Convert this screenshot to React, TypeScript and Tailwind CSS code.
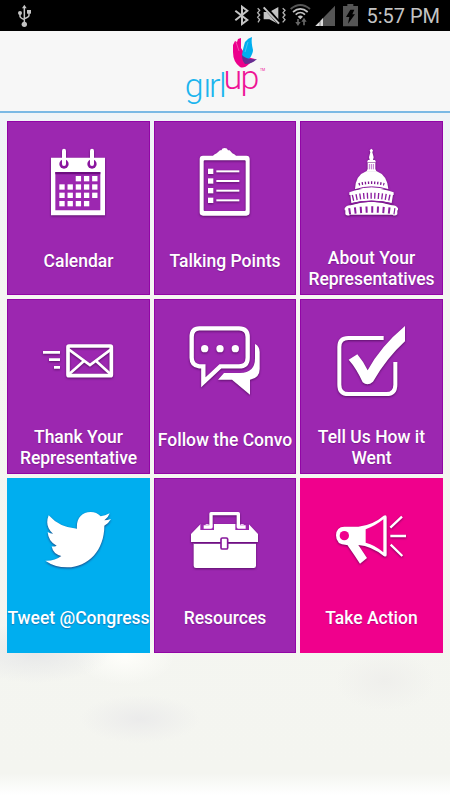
import type { ReactNode } from 'react';
import clsx from 'clsx';

type Tile = {
  lines: string[];
  color: 'purple' | 'blue' | 'pink';
  viewBox: string;
  icon: ReactNode;
  tall?: boolean;
};

const PURPLE = '#9c27b0';

const CalendarIcon = () => (
  <>
    <path d="M153 128H315V301H153Z" fill="#fff" />
    <path d="M166 171H301V286H166Z" fill={PURPLE} />
    <path d="M166 171H301V178H166Z" fill="#6d0d80" />
    {[192, 276].map((x) => (
      <g key={x}>
        <circle cx={x} cy="147" r="14" fill="#8a169e" />
        <rect x={x - 6} y="101" width="12" height="52" rx="6" fill="#fff" />
      </g>
    ))}
    {[
      [2, 3, 4],
      [0, 1, 2, 3, 4],
      [0, 1, 2, 3, 4],
      [0, 1, 2, 3],
    ].map((row, r) =>
      row.map((c) => (
        <rect key={`${r}-${c}`} x={178 + c * 24.6} y={183 + r * 25} width="16" height="16" fill="#fff" />
      )),
    )}
  </>
);

const ClipboardIcon = () => (
  <>
    <path d="M188 124Q192 118 200 115L210 106H214Q216 99 224 99Q232 99 234 106H239L247 115Q255 118 259 124Z" fill="#fff" />
    <path
      fillRule="evenodd"
      d="M159 122H289Q299 122 299 132V292Q299 302 289 302H159Q149 302 149 292V132Q149 122 159 122ZM164 136Q161 136 161 139V285Q161 288 164 288H284Q287 288 287 285V139Q287 136 284 136Z"
      fill="#fff"
    />
    {[169, 198, 227, 256].map((y) => (
      <g key={y} fill="#fff">
        <rect x="174" y={y - 8} width="16" height="16" />
        <rect x="199" y={y - 3} width="69" height="6" />
      </g>
    ))}
  </>
);

const CapitolIcon = () => (
  <>
    <g fill="#fff">
      <path d="M229 101L234 106L232 112L236 127L234 135H224L222 127L226 112L224 106Z" />
      <path d="M219 135H240L243 142H216ZM218 143H241V162L245 170H214L218 162Z" />
      <path d="M180 222Q182 180 214 169H245Q276 180 280 222Z" />
      <path d="M163 232Q228 208 296 232V240H163ZM166 239H294L290 264Q230 250 169 264Z" />
      <path d="M149 280Q155 270 167 271Q229 250 291 271Q303 270 309 280V286H149ZM151 285H307V298Q300 305 292 299H166Q158 305 151 298Z" />
    </g>
    <path d="M191 208Q229 198 268 208" fill="none" stroke="#7c1590" strokeWidth="8" strokeDasharray="4 5.3" />
    <path d="M223 147V163M229 147V163M235 147V163" stroke={PURPLE} strokeWidth="2" />
    <path d="M180 224Q229 207 281 224" fill="none" stroke="#8a1a9d" strokeWidth="3" />
    <path d="M172 249Q229 235 289 249" fill="none" stroke="#8c1da0" strokeWidth="18" strokeDasharray="4 7" />
    <path d="M161 289Q229 278 300 289" fill="none" stroke="#8c1da0" strokeWidth="19" strokeDasharray="6 11" />
    <path d="M163 268Q229 249 296 268" fill="none" stroke="#8a1a9d" strokeWidth="4" />
  </>
);

const EnvelopeIcon = () => (
  <g fill="none" stroke="#fff">
    <rect x="204" y="153" width="130" height="89" rx="3" strokeWidth="11" />
    <path d="M207 164L270 210L332 164M207 238L251 199M332 238L289 199" strokeWidth="8" />
    <path d="M129 172H180M147 194H180M162 217H180" strokeWidth="8" />
  </g>
);

const ChatIcon = () => (
  <>
    <path
      d="M148 100H267Q293 100 293 126V188Q293 214 267 214H211L160 262V214H148Q125 211 125 188V126Q125 100 148 100Z"
      fill="none"
      stroke="#fff"
      strokeWidth="13"
    />
    <g fill="#fff">
      <circle cx="164" cy="161" r="11" />
      <circle cx="210" cy="161" r="11" />
      <circle cx="256" cy="161" r="11" />
      <path d="M315 147Q329 154 329 171V222Q329 250 300 254V299L246 254H204L222 234H270Q315 234 315 190Z" />
    </g>
  </>
);

const CheckIcon = () => (
  <>
    <path
      d="M266 129H160Q133 129 133 156V269Q133 297 160 297H274Q301 297 301 269V201"
      fill="none"
      stroke="#fff"
      strokeWidth="12"
    />
    <path d="M161 194L187 178Q204 198 218 226Q256 155 330 93V139Q276 188 234 260Q218 274 203 262Q185 221 161 194Z" fill="#fff" />
  </>
);

const BirdIcon = () => (
  <path
    d="M136 257Q165 258 184 243Q159 237 155 214Q162 216 170 212Q145 200 143 171Q151 176 159 176Q133 154 146 121Q180 159 231 161C228 131 245 111 272 111Q290 111 302 124Q315 122 329 115Q325 128 313 136Q322 136 333 132Q326 145 313 152C313 226 265 276 202 277Q164 277 136 257Z"
    fill="#fff"
  />
);

const ToolboxIcon = () => (
  <>
    <path d="M152 147H296L324 177V201H123V177ZM131 205H318V272Q318 279 311 279H138Q131 279 131 272Z" fill="#fff" />
    <path d="M159 147V157H184V147M264 147V157H289V147" fill="none" stroke={PURPLE} strokeWidth="16" />
    <path d="M161 156H183V116H265V156H287" fill="none" stroke="#fff" strokeWidth="10" strokeLinejoin="round" />
    <path d="M131 204H318" stroke="#74108a" strokeWidth="4" />
    <rect x="213" y="189" width="20" height="33" rx="4" fill="#fff" stroke="#87189b" strokeWidth="5" />
  </>
);

const MegaphoneIcon = () => (
  <>
    <path d="M148 155H190Q234 150 266 122Q275 118 275 127V239Q275 248 266 243Q229 213 190 210L216 249L195 266Q178 240 157 210Q123 211 123 181Q124 155 148 155Z" fill="#fff" />
    <circle cx="148" cy="182" r="14" fill="#f0008c" />
    <path d="M212 163Q242 152 265 133V232Q240 210 212 203Z" fill="#f0008c" />
    <path d="M286 158L321 125M286 183H333M287 209L322 243" stroke="#fff" strokeWidth="7" />
  </>
);

const tiles: Tile[] = [
  { lines: ['Calendar'], color: 'purple', viewBox: '21 18 429 300', icon: <CalendarIcon /> },
  { lines: ['Talking Points'], color: 'purple', viewBox: '12 18 426 300', icon: <ClipboardIcon /> },
  { lines: ['About Your', 'Representatives'], color: 'purple', viewBox: '15 18 429 300', icon: <CapitolIcon /> },
  { lines: ['Thank Your', 'Representative'], color: 'purple', viewBox: '21 12 429 303', icon: <EnvelopeIcon />, tall: true },
  { lines: ['Follow the Convo'], color: 'purple', viewBox: '12 12 426 303', icon: <ChatIcon />, tall: true },
  { lines: ['Tell Us How it', 'Went'], color: 'purple', viewBox: '15 12 429 303', icon: <CheckIcon />, tall: true },
  { lines: ['Tweet @Congress'], color: 'blue', viewBox: '21 9 429 300', icon: <BirdIcon /> },
  { lines: ['Resources'], color: 'purple', viewBox: '12 9 426 300', icon: <ToolboxIcon /> },
  { lines: ['Take Action'], color: 'pink', viewBox: '15 9 429 300', icon: <MegaphoneIcon /> },
];

const MenuTile = ({ lines, color, viewBox, icon, tall }: Tile) => (
  <button
    className={clsx(
      'flex flex-col items-center text-white',
      color === 'purple' && 'bg-[#9c27b0] shadow-[inset_0_0_0_1px_#9205a6]',
      color === 'blue' && 'bg-[#00aeef]',
      color === 'pink' && 'bg-[#f0008c]',
    )}
  >
    <svg
      viewBox={viewBox}
      className={clsx('w-full shrink-0 drop-shadow-[0_1px_1px_rgba(50,0,60,0.6)]', tall ? 'h-[101px]' : 'h-[100px]')}
    >
      {icon}
    </svg>
    <span
      className={clsx(
        'text-center text-[17.5px] leading-[21px] font-medium whitespace-nowrap [text-shadow:0_1px_1px_rgba(60,0,70,0.3)]',
        lines.length > 1 ? 'pt-[27px]' : 'pt-[30px]',
      )}
    >
      {lines.map((line) => (
        <span key={line} className="block">
          {line}
        </span>
      ))}
    </span>
  </button>
);

const StatusBar = () => (
  <div className="flex h-[31px] items-center justify-between bg-black">
    {/* USB */}
    <svg viewBox="45 0 60 93" className="ml-[15px] h-[31px] w-5" fill="none" stroke="#c4c4c4" strokeWidth="4.5">
      <path d="M73 24V70M60 41V49Q60 54 73 59M87 38V46Q87 52 73 56" />
      <path d="M73 14L80 25H66Z" fill="#c4c4c4" stroke="none" />
      <circle cx="73" cy="73" r="8" fill="#c4c4c4" stroke="none" />
      <circle cx="60" cy="39" r="6" fill="#c4c4c4" stroke="none" />
      <path d="M81 30H93V41H81Z" fill="#c4c4c4" stroke="none" />
    </svg>

    <div className="flex h-[31px] items-center">
      {/* Bluetooth */}
      <svg viewBox="27 0 63 93" className="h-[31px] w-[21px]" fill="none" stroke="#c4c4c4" strokeWidth="6">
        <path d="M34 32L70 60L54 72V20L70 32L34 61" />
      </svg>
      {/* Muted with vibration */}
      <svg viewBox="90 0 102 93" className="h-[31px] w-[34px]">
        <path d="M119 36H136L163 21V72L136 58H119Z" fill="#c4c4c4" />
        <path d="M122 20L168 72" stroke="#000" strokeWidth="12" />
        <path d="M119 22L165 71" stroke="#c4c4c4" strokeWidth="6" />
        <path
          d="M101 25L107 31L101 38L107 45L101 52L107 59L102 67M176 25L183 31L177 38L183 45L177 52L183 59L176 67"
          fill="none"
          stroke="#b4b4b4"
          strokeWidth="4"
        />
      </svg>
      {/* Wifi with traffic arrows */}
      <svg viewBox="192 0 75 93" className="h-[31px] w-[25px]" fill="none">
        <path d="M200 27Q229 3 258 27" stroke="#555" strokeWidth="6" />
        <path d="M207 36Q229 17 251 36M215 44Q229 31 243 44" stroke="#c4c4c4" strokeWidth="5" />
        <path d="M221 50Q229 43 237 50L229 58Z" fill="#c4c4c4" />
        <path d="M222 57V70M240 76V60" stroke="#666" strokeWidth="5" />
        <path d="M214 66H230L222 78ZM232 65L240 53L248 65Z" fill="#666" />
      </svg>
      {/* Signal */}
      <svg viewBox="267 0 78 93" className="h-[31px] w-[26px]">
        <path d="M333 17V78H274Z" fill="#555" />
        <path d="M274 78L287 65V78ZM289 63L297 54V78H289Z" fill="#ddd" />
      </svg>
      {/* Charging battery */}
      <svg viewBox="345 0 69 93" className="h-[31px] w-[23px]">
        <path d="M370 12H388V18H402V79H357V18H370Z" fill="#555" />
        <path d="M379 29H391L385 43H393L372 71L376 51H366Z" fill="#000" />
      </svg>
      <span className="mr-[10px] ml-[4px] pt-px text-[20px] leading-[30px] text-[#c4c4c4]">5:57 PM</span>
    </div>
  </div>
);

const Header = () => (
  <header className="flex h-[82px] justify-center border-b-2 border-[#7ab9e4] bg-[#f7f7f7]">
    <svg viewBox="180 31 90 80" className="h-[80px] w-[90px]">
      {/* Bird made of two wings */}
      <path
        d="M233 45L235 41L237 42L238 39L241 38L241 48L247 57L255 59Q252 62 249 64Q244 69 240 67Q233 62 233 52Z"
        fill="#ec008c"
      />
      <path d="M242 55Q243 48 245 42Q248 38 252 37Q251 42 253 50Q253 53 250 58L244 62Z" fill="#00aeef" />
      <path d="M242 55Q246 60 257 59Q252 64 245 64Q242 61 242 55Z" fill="#662d91" />
      <path d="M236 42L239 51M248 42L245 52" stroke="#f7f7f7" strokeWidth="0.3" />
      <g className="font-['Roboto'] font-light" fontSize="34">
        <text x="184.8 203.5 209 219" y="97" fill="#1cb5ee">
          gırl
        </text>
        <text x="223.5 240.5" y="89" fill="#ee1496">
          up
        </text>
      </g>
      <text x="260" y="71" fontSize="3.5" fill="#ee1496">
        TM
      </text>
    </svg>
  </header>
);

const App = () => (
  <div className="flex h-[800px] w-[450px] flex-col bg-white font-['Roboto',sans-serif]">
    <StatusBar />
    <Header />
    <main className="flex-1 bg-[radial-gradient(ellipse_75px_30px_at_35px_540px,#e7e8e9,transparent),radial-gradient(ellipse_50px_28px_at_125px_544px,#fefefa,transparent),radial-gradient(ellipse_60px_24px_at_140px_606px,#ebebeb,transparent),radial-gradient(ellipse_50px_30px_at_385px_568px,#efefec,transparent),linear-gradient(#eff4f7_0,#f5f6f2_180px,#f4f5f0_660px,#ffffff_682px)] px-[7px] pt-2">
      <div className="grid grid-cols-[143px_142px_143px] grid-rows-[174px_175px_175px] gap-1">
        {tiles.map((tile) => (
          <MenuTile key={tile.lines[0]} {...tile} />
        ))}
      </div>
    </main>
  </div>
);

export default App;
